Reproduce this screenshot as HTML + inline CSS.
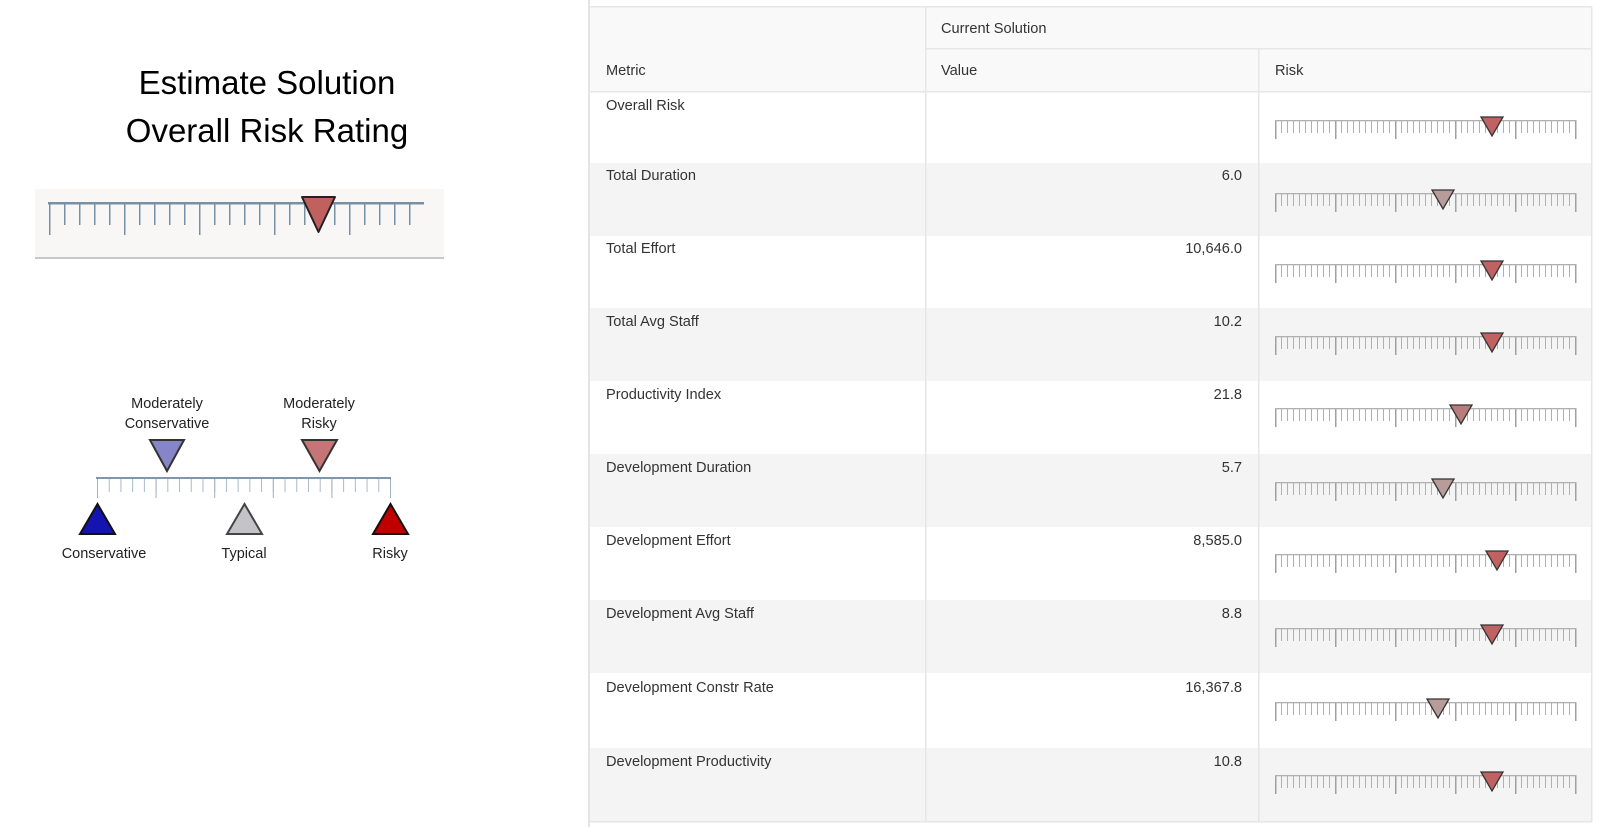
<!DOCTYPE html>
<html><head><meta charset="utf-8"><style>
body{margin:0;width:1600px;height:827px;overflow:hidden;background:#fff;font-family:"Liberation Sans",sans-serif;position:relative}
.t{position:absolute;font-size:14.6px;color:#333;white-space:nowrap}
.r{position:absolute;left:590px;width:1002px;height:73px}
.v{position:absolute;font-size:14.6px;color:#333;right:358px;text-align:right}
</style></head><body>
<div style="position:absolute;left:0;top:59px;width:534px;text-align:center;font-size:33px;line-height:48px;color:#000">Estimate Solution<br>Overall Risk Rating</div>

<div style="position:absolute;left:588px;top:0;width:2px;height:827px;background:#e4e4e4"></div>
<div style="position:absolute;left:590px;top:7px;width:1002px;height:85px;background:#f9f9f9"></div>
<div class="r" style="top:163px;background:#f4f4f4"></div>
<div class="r" style="top:308px;background:#f4f4f4"></div>
<div class="r" style="top:454px;background:#f4f4f4"></div>
<div class="r" style="top:600px;background:#f4f4f4"></div>
<div class="r" style="top:748px;background:#f4f4f4"></div>

<svg width="1600" height="827" style="position:absolute;left:0;top:0">
<defs>
<pattern id="mn" x="0" y="0" width="6" height="40" patternUnits="userSpaceOnUse"><rect x="0" y="0" width="1" height="13" fill="#b0b0b0"/></pattern>
<pattern id="mj" x="0" y="0" width="60" height="40" patternUnits="userSpaceOnUse"><rect x="0" y="0" width="1.5" height="19" fill="#a0a0a0"/></pattern>
<symbol id="g" overflow="visible">
<rect x="0" y="0" width="301.5" height="13" fill="url(#mn)"/>
<rect x="0" y="0" width="301.5" height="19" fill="url(#mj)"/>
<rect x="0" y="0" width="301.5" height="1.3" fill="#b0b0b0"/>
</symbol>
<pattern id="bmn" x="49" y="0" width="15" height="300" patternUnits="userSpaceOnUse"><rect x="-1" y="0" width="2.5" height="300" fill="#7890a6"/></pattern>
<pattern id="bmj" x="49" y="0" width="75" height="300" patternUnits="userSpaceOnUse"><rect x="-1" y="0" width="2.5" height="300" fill="#7890a6"/></pattern>
<pattern id="lmn" x="97" y="0" width="11.72" height="600" patternUnits="userSpaceOnUse"><rect x="-0.8" y="0" width="1.8" height="600" fill="#a9bacb"/></pattern>
<pattern id="lmj" x="97" y="0" width="58.6" height="600" patternUnits="userSpaceOnUse"><rect x="-0.8" y="0" width="1.8" height="600" fill="#9fb1c2"/></pattern>
</defs>
<g fill="#e6e6e6">
<rect x="590" y="6" width="1002" height="1.5"/>
<rect x="926" y="48" width="666" height="1.5"/>
<rect x="590" y="91" width="1002" height="1.5"/>
<rect x="590" y="821" width="1002" height="1.5"/>
<rect x="925" y="7" width="1.5" height="815"/>
<rect x="1258" y="49" width="1.5" height="773"/>
<rect x="1591" y="7" width="1.5" height="815"/>
</g>
<rect x="35" y="189" width="409" height="69" fill="#f8f7f5"/>
<rect x="35" y="257" width="409" height="2" fill="#c8c8c8"/>
<rect x="48" y="203" width="376" height="22" fill="url(#bmn)"/>
<rect x="48" y="203" width="376" height="32" fill="url(#bmj)"/>
<rect x="48" y="202" width="376" height="2.5" fill="#7890a6"/>
<polygon points="302,197 335,197 318.5,232" fill="#c0605f" stroke="#222" stroke-width="2" stroke-linejoin="round"/>
<rect x="96" y="478" width="296" height="14" fill="url(#lmn)"/>
<rect x="96" y="478" width="296" height="20" fill="url(#lmj)"/>
<rect x="96" y="477" width="295" height="2" fill="#7f96ac"/>
<polygon points="150,440 184,440 167,471" fill="#8585c8" stroke="#333" stroke-width="2"/>
<polygon points="302,440 337,440 319.5,471" fill="#c57575" stroke="#333" stroke-width="2"/>
<polygon points="80,534 115,534 97.5,504" fill="#1414b0" stroke="#111" stroke-width="2"/>
<polygon points="227,534 262,534 244.5,504" fill="#c4c4c8" stroke="#444" stroke-width="2"/>
<polygon points="373,534 408,534 390.5,504" fill="#c00000" stroke="#111" stroke-width="2"/>
<g font-family="Liberation Sans, sans-serif" font-size="14.5" fill="#222" text-anchor="middle">
<text x="167" y="408">Moderately</text><text x="167" y="428">Conservative</text>
<text x="319" y="408">Moderately</text><text x="319" y="428">Risky</text>
<text x="104" y="558">Conservative</text><text x="244" y="558">Typical</text><text x="390" y="558">Risky</text>
</g>
<g transform="translate(1275,120)"><use href="#g"/><polygon points="206,-3 228,-3 217,16" fill="#c06262" stroke="#333" stroke-width="1.3"/></g>
<g transform="translate(1275,193)"><use href="#g"/><polygon points="157,-3 179,-3 168,16" fill="#b89c9c" stroke="#333" stroke-width="1.3"/></g>
<g transform="translate(1275,264)"><use href="#g"/><polygon points="206,-3 228,-3 217,16" fill="#c06262" stroke="#333" stroke-width="1.3"/></g>
<g transform="translate(1275,336)"><use href="#g"/><polygon points="206,-3 228,-3 217,16" fill="#c06262" stroke="#333" stroke-width="1.3"/></g>
<g transform="translate(1275,408)"><use href="#g"/><polygon points="175,-3 197,-3 186,16" fill="#b97c7c" stroke="#333" stroke-width="1.3"/></g>
<g transform="translate(1275,482)"><use href="#g"/><polygon points="157,-3 179,-3 168,16" fill="#b89c9c" stroke="#333" stroke-width="1.3"/></g>
<g transform="translate(1275,554)"><use href="#g"/><polygon points="211,-3 233,-3 222,16" fill="#c06262" stroke="#333" stroke-width="1.3"/></g>
<g transform="translate(1275,628)"><use href="#g"/><polygon points="206,-3 228,-3 217,16" fill="#c06262" stroke="#333" stroke-width="1.3"/></g>
<g transform="translate(1275,702)"><use href="#g"/><polygon points="152,-3 174,-3 163,16" fill="#b89c9c" stroke="#333" stroke-width="1.3"/></g>
<g transform="translate(1275,775)"><use href="#g"/><polygon points="206,-3 228,-3 217,16" fill="#c06262" stroke="#333" stroke-width="1.3"/></g>
</svg>

<div class="t" style="left:941px;top:21px">Current Solution</div>
<div class="t" style="left:606px;top:63px">Metric</div>
<div class="t" style="left:941px;top:63px">Value</div>
<div class="t" style="left:1275px;top:63px">Risk</div>

<div class="t" style="left:606px;top:98px">Overall Risk</div>
<div class="t" style="left:606px;top:168px">Total Duration</div><div class="v" style="top:168px">6.0</div>
<div class="t" style="left:606px;top:241px">Total Effort</div><div class="v" style="top:241px">10,646.0</div>
<div class="t" style="left:606px;top:314px">Total Avg Staff</div><div class="v" style="top:314px">10.2</div>
<div class="t" style="left:606px;top:387px">Productivity Index</div><div class="v" style="top:387px">21.8</div>
<div class="t" style="left:606px;top:460px">Development Duration</div><div class="v" style="top:460px">5.7</div>
<div class="t" style="left:606px;top:533px">Development Effort</div><div class="v" style="top:533px">8,585.0</div>
<div class="t" style="left:606px;top:606px">Development Avg Staff</div><div class="v" style="top:606px">8.8</div>
<div class="t" style="left:606px;top:680px">Development Constr Rate</div><div class="v" style="top:680px">16,367.8</div>
<div class="t" style="left:606px;top:754px">Development Productivity</div><div class="v" style="top:754px">10.8</div>
</body></html>
